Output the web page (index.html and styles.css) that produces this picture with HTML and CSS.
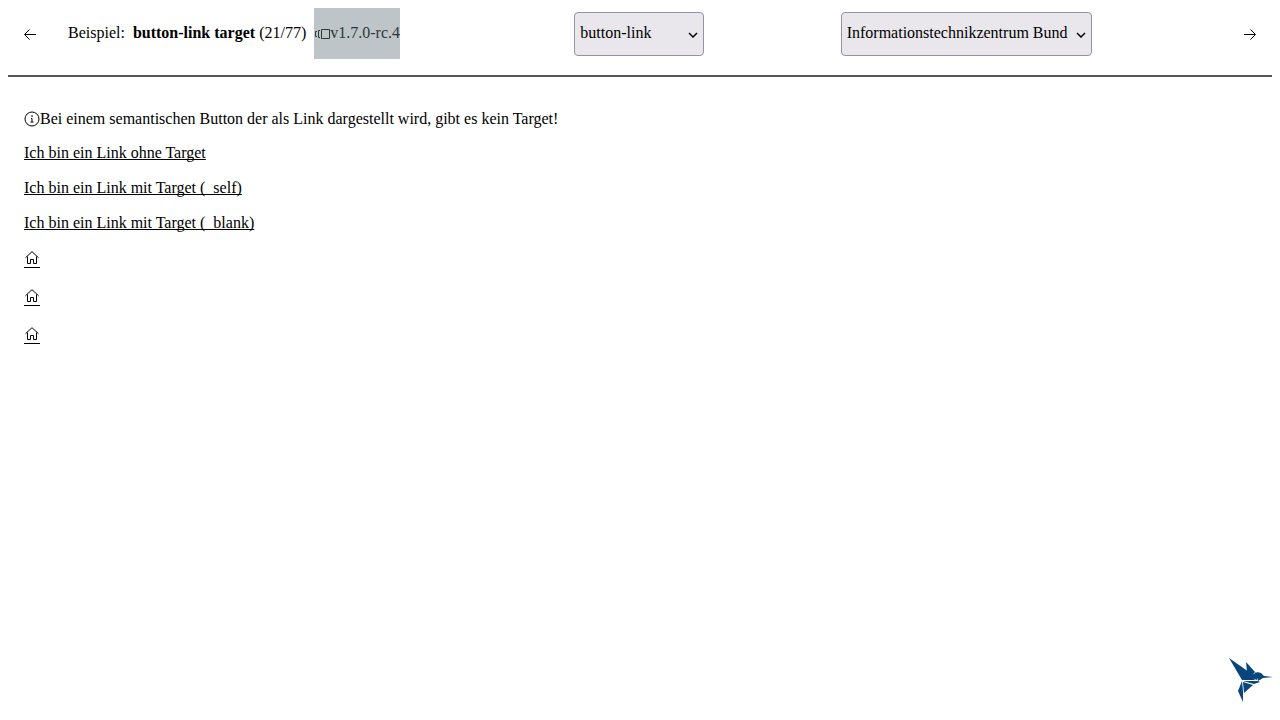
FILE: index.html
```html
<!DOCTYPE html>
<html lang="de">
<head>
<meta charset="utf-8">
<title>button-link target</title>
<link rel="stylesheet" href="styles.css">
</head>
<body>
<header class="toolbar">
  <div class="intro">
    <button class="nav-button" type="button" aria-label="Vorheriges Beispiel">
      <svg width="12" height="12" viewBox="0 0 12 12"><path d="M12 6.5H1M5.5 1.5l-5 5 5 5"/></svg>
    </button>
    <div class="title">
      <span>Beispiel:</span>
      <span><strong>button-link target</strong> (21/77)</span>
      <span class="version"><svg width="15" height="12" viewBox="0 0 15 12" aria-hidden="true"><path d="M2 3.5H.5v5H2M5 2.5H3.5v7H5M6.5 1.5h8v9h-8z"/></svg>v1.7.0-rc.4</span>
    </div>
  </div>
  <div class="picker">
    <select class="select select-component" aria-label="Komponente"><option>button-link</option></select>
    <svg class="chevron" width="10" height="6" viewBox="0 0 10 6"><path d="M1 1l4 4 4-4"/></svg>
  </div>
  <div class="picker">
    <select class="select select-theme" aria-label="Theme"><option>Informationstechnikzentrum Bund</option></select>
    <svg class="chevron" width="10" height="6" viewBox="0 0 10 6"><path d="M1 1l4 4 4-4"/></svg>
  </div>
  <button class="nav-button" type="button" aria-label="Nächstes Beispiel">
    <svg width="12" height="12" viewBox="0 0 12 12"><path d="M0 6.5h11M6.5 1.5l5 5-5 5"/></svg>
  </button>
</header>
<main class="content">
  <p class="note"><svg class="info" width="16" height="16" viewBox="0 0 16 16"><circle cx="8" cy="8" r="7"/><path d="M8 4v2M7 7.500h1V11M6.500 11h3"/></svg>Bei einem semantischen Button der als Link dargestellt wird, gibt es kein Target!</p>
  <a class="link" href="#">Ich bin ein Link ohne Target</a>
  <a class="link" href="#">Ich bin ein Link mit Target (_self)</a>
  <a class="link" href="#">Ich bin ein Link mit Target (_blank)</a>
  <a class="link-icon" href="#" aria-label="Startseite"><svg width="16" height="16" viewBox="0 0 16 16"><path d="M1.5 7.7L8 1.7l6.5 6M3.5 6.5v7h3v-4h3v4h3v-7"/></svg></a>
  <a class="link-icon" href="#" aria-label="Startseite"><svg width="16" height="16" viewBox="0 0 16 16"><path d="M1.5 7.7L8 1.7l6.5 6M3.5 6.5v7h3v-4h3v4h3v-7"/></svg></a>
  <a class="link-icon" href="#" aria-label="Startseite"><svg width="16" height="16" viewBox="0 0 16 16"><path d="M1.5 7.7L8 1.7l6.5 6M3.5 6.5v7h3v-4h3v4h3v-7"/></svg></a>
</main>
<svg class="logo" width="46" height="46" viewBox="0 0 46 46" aria-label="Kolibri" role="img">
  <path d="M1 1l20 14 6 8H14z"/>
  <path d="M18 5l9 10-4 5-4-5z"/>
  <path d="M22 16l5 2 2 5-5-2z"/>
  <path d="M25 18l3-3 3 3-2 5z"/>
  <path d="M29 15l4 1 3 3 9 1-10 1-5 3z"/>
  <path d="M15 24h15l2 1-6 2z"/>
  <path d="M14 24l-4 10 5 11V34z"/>
  <path d="M15 25l10 3-9 8z"/>
</svg>
</body>
</html>
```
FILE: styles.css
```css
* { box-sizing: border-box; }
body {
  margin: 8px;
  background: #fff;
  color: #000;
  font: 16px/18px "Liberation Serif", "Times New Roman", serif;
}
svg { fill: none; stroke: currentColor; }
.toolbar {
  display: flex;
  justify-content: space-between;
  align-items: flex-start;
  padding-bottom: 16px;
  border-bottom: 2px solid #5b5758;
}
.intro { display: flex; gap: 16px; padding-right: 38px; }
.nav-button {
  display: flex;
  align-items: center;
  justify-content: center;
  width: 44px;
  height: 51px;
  padding: 0;
  border: 0;
  background: none;
  color: inherit;
}
.title { display: flex; gap: 8px; height: 51px; line-height: 49px; white-space: nowrap; }
.version {
  display: flex;
  background: #bdc5c8;
  color: #303638;
}
.version svg { margin: 20px 0 0 1px; }
.picker { position: relative; margin-top: 4px; }
.select {
  appearance: none;
  display: block;
  height: 44px;
  padding: 0 5px 2px;
  border: 1px solid #9393a5;
  border-radius: 4px;
  background: #e9e7ec;
  color: #000;
  font: inherit;
}
.select-component { width: 130px; }
.select-theme { width: 251px; }
.chevron {
  position: absolute;
  right: 6px;
  top: 20px;
  stroke-width: 1.5;
  pointer-events: none;
}
.content {
  display: flex;
  flex-direction: column;
  align-items: flex-start;
  gap: 16px;
  padding: 32px 16px;
}
.note { display: flex; align-items: center; height: 19px; margin: 0; line-height: 18px; }
.info { margin-top: 1px; }
.link { height: 19px; color: #000; text-decoration: underline; text-decoration-skip-ink: none; text-underline-offset: 1px; }
.link-icon { display: flex; padding-top: 1px; height: 19px; margin-bottom: 3px; border-bottom: 1px solid #000; color: #000; }
.logo { position: fixed; right: 6px; bottom: 17px; fill: #07457b; stroke: none; }
```
